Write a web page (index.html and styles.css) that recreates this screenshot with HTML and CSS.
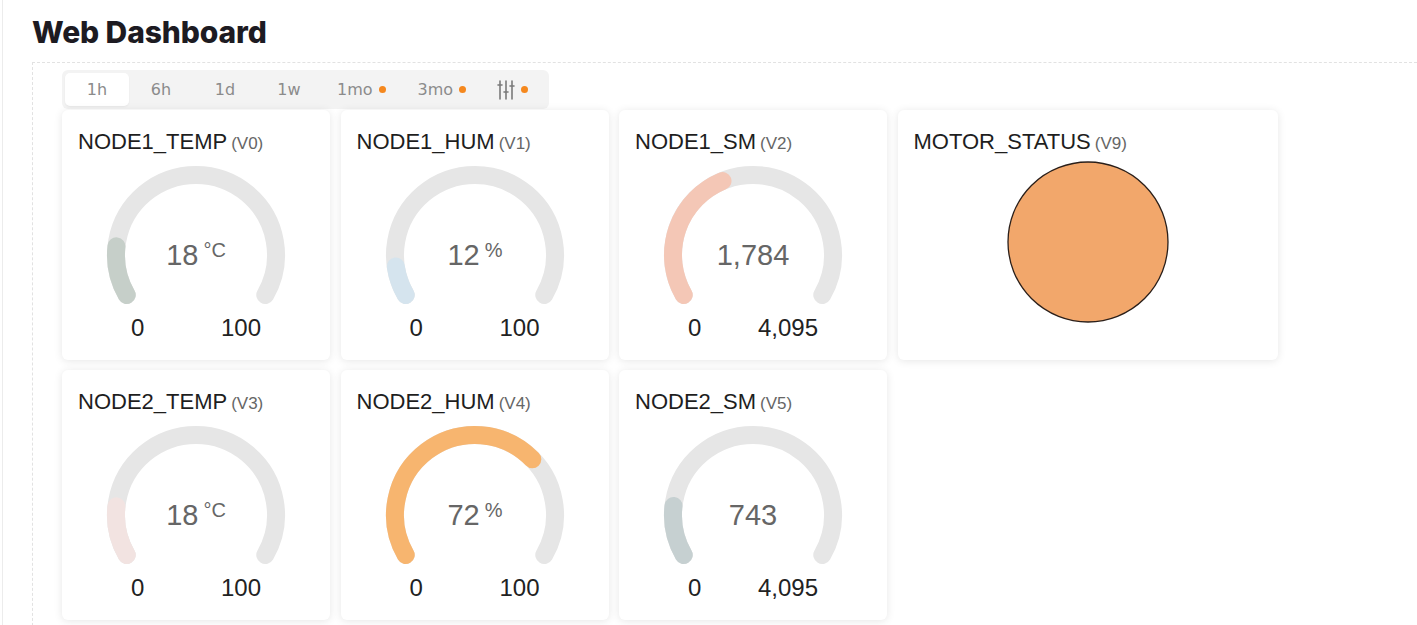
FILE: index.html
```html
<!DOCTYPE html>
<html lang="en">
<head>
<meta charset="utf-8">
<title>Web Dashboard</title>
<link rel="stylesheet" href="styles.css">
</head>
<body>
<div class="page">
  <h1 class="title">Web Dashboard</h1>
  <div class="board">
    <div class="tabs">
      <div class="tab active">1h</div>
      <div class="tab">6h</div>
      <div class="tab">1d</div>
      <div class="tab">1w</div>
      <div class="tab">1mo<span class="dot"></span></div>
      <div class="tab">3mo<span class="dot"></span></div>
      <div class="tab">
        <svg class="sliders" width="18" height="20" viewBox="0 0 18 20">
          <path d="M3 1v18M9 1v18M15 1v18" />
          <path d="M1 5h4M7 12h4M13 6h4" />
        </svg><span class="dot"></span>
      </div>
    </div>

    <div class="grid">
      <div class="card">
        <div class="card-title">NODE1_TEMP<span class="pin">(V0)</span></div>
        <svg class="gauge" width="180" height="145" viewBox="0 0 180 145">
          <path class="track" d="M20.72 130 A80 80 0 1 1 159.28 130"/>
          <path class="arc c-temp1" d="M20.72 130 A80 80 0 0 1 10.46 81.36"/>
          <text class="val" x="90" y="100" text-anchor="middle">18<tspan class="unit" dx="5" dy="-8">°C</tspan></text>
        </svg>
        <div class="range"><span>0</span><span>100</span></div>
      </div>

      <div class="card">
        <div class="card-title">NODE1_HUM<span class="pin">(V1)</span></div>
        <svg class="gauge" width="180" height="145" viewBox="0 0 180 145">
          <path class="track" d="M20.72 130 A80 80 0 1 1 159.28 130"/>
          <path class="arc c-hum1" d="M20.72 130 A80 80 0 0 1 10.82 101.41"/>
          <text class="val" x="90" y="100" text-anchor="middle">12<tspan class="unit" dx="5" dy="-8">%</tspan></text>
        </svg>
        <div class="range"><span>0</span><span>100</span></div>
      </div>

      <div class="card">
        <div class="card-title">NODE1_SM<span class="pin">(V2)</span></div>
        <svg class="gauge" width="180" height="145" viewBox="0 0 180 145">
          <path class="track" d="M20.72 130 A80 80 0 1 1 159.28 130"/>
          <path class="arc c-sm1" d="M20.72 130 A80 80 0 0 1 59.51 16.04"/>
          <text class="val" x="90" y="100" text-anchor="middle">1,784</text>
        </svg>
        <div class="range"><span>0</span><span>4,095</span></div>
      </div>

      <div class="card card-wide">
        <div class="card-title">MOTOR_STATUS<span class="pin">(V9)</span></div>
        <svg class="led" width="164" height="164" viewBox="0 0 164 164">
          <circle cx="82" cy="82" r="80"/>
        </svg>
      </div>

      <div class="card">
        <div class="card-title">NODE2_TEMP<span class="pin">(V3)</span></div>
        <svg class="gauge" width="180" height="145" viewBox="0 0 180 145">
          <path class="track" d="M20.72 130 A80 80 0 1 1 159.28 130"/>
          <path class="arc c-temp2" d="M20.72 130 A80 80 0 0 1 10.46 81.36"/>
          <text class="val" x="90" y="100" text-anchor="middle">18<tspan class="unit" dx="5" dy="-8">°C</tspan></text>
        </svg>
        <div class="range"><span>0</span><span>100</span></div>
      </div>

      <div class="card">
        <div class="card-title">NODE2_HUM<span class="pin">(V4)</span></div>
        <svg class="gauge" width="180" height="145" viewBox="0 0 180 145">
          <path class="track" d="M20.72 130 A80 80 0 1 1 159.28 130"/>
          <path class="arc c-hum2" d="M20.72 130 A80 80 0 0 1 147.35 34.22"/>
          <text class="val" x="90" y="100" text-anchor="middle">72<tspan class="unit" dx="5" dy="-8">%</tspan></text>
        </svg>
        <div class="range"><span>0</span><span>100</span></div>
      </div>

      <div class="card">
        <div class="card-title">NODE2_SM<span class="pin">(V5)</span></div>
        <svg class="gauge" width="180" height="145" viewBox="0 0 180 145">
          <path class="track" d="M20.72 130 A80 80 0 1 1 159.28 130"/>
          <path class="arc c-sm2" d="M20.72 130 A80 80 0 0 1 10.51 80.94"/>
          <text class="val" x="90" y="100" text-anchor="middle">743</text>
        </svg>
        <div class="range"><span>0</span><span>4,095</span></div>
      </div>
    </div>
  </div>
</div>
</body>
</html>
```

FILE: styles.css
```css
html, body {
  margin: 0;
  padding: 0;
  background: #ffffff;
  overflow: hidden;
}

body {
  font-family: "Liberation Sans", Arial, sans-serif;
  color: #222;
}

.page {
  margin-left: 2px;
  border-left: 1px solid #ececec;
  padding-left: 29px;
  min-height: 625px;
}

.title {
  margin: 0;
  padding-top: 14px;
  height: 36px;
  line-height: 36px;
  font-family: "Inter", "Liberation Sans", sans-serif;
  font-weight: 800;
  font-size: 30px;
  letter-spacing: -0.1px;
  color: #1d1b22;
  margin-bottom: 12px;
}

.board {
  border: 1px dashed #e2e2e2;
  border-right: none;
  padding: 7px 0 0 29px;
  min-height: 600px;
}

.tabs {
  display: inline-flex;
  background: #f3f3f3;
  border-radius: 6px;
  padding: 3px;
  height: 33px;
}

.tab {
  min-width: 64px;
  box-sizing: border-box;
  padding: 0 16px;
  display: flex;
  align-items: center;
  justify-content: center;
  font-family: "DejaVu Sans", sans-serif;
  font-size: 16px;
  color: #8b8b8b;
}

.tab.active {
  background: #ffffff;
  border-radius: 5px;
  box-shadow: 0 1px 2px rgba(0, 0, 0, 0.05);
}

.dot {
  width: 7px;
  height: 7px;
  border-radius: 50%;
  background: #f5881e;
  margin-left: 6px;
  flex: none;
}

.sliders {
  display: block;
  margin-left: -4px;
}

.sliders path {
  stroke: #7a7a7a;
  stroke-width: 1.6;
  fill: none;
  stroke-linecap: round;
}

.grid {
  display: grid;
  grid-template-columns: 268px 268px 268px 380px;
  grid-template-rows: 250px 250px;
  column-gap: 10.5px;
  row-gap: 10px;
  margin-top: 1px;
}

.card {
  background: #ffffff;
  border-radius: 6px;
  box-shadow: 0 1px 8px rgba(0, 0, 0, 0.1);
  padding: 19px 16px 0;
  display: flex;
  flex-direction: column;
  align-items: center;
}

.card-title {
  align-self: stretch;
  font-size: 22px;
  line-height: 26px;
  color: #1e1e1e;
  letter-spacing: 0;
  white-space: nowrap;
}

.pin {
  font-size: 17px;
  color: #666;
  margin-left: 4px;
}

.gauge {
  display: block;
  margin-top: 8px;
}

.track, .arc {
  fill: none;
  stroke-width: 18;
  stroke-linecap: round;
}

.track { stroke: #e6e6e6; }
.c-temp1 { stroke: #c6cfc9; }
.c-hum1 { stroke: #d5e4ee; }
.c-sm1 { stroke: #f4c7b6; }
.c-temp2 { stroke: #f2e3e1; }
.c-hum2 { stroke: #f7b56f; }
.c-sm2 { stroke: #c6d0d1; }

.val {
  font-family: "Liberation Sans", Arial, sans-serif;
  font-size: 29px;
  fill: #666;
}

.unit {
  font-size: 20px;
}

.range {
  width: 130px;
  display: flex;
  justify-content: space-between;
  font-size: 24px;
  line-height: 28px;
  color: #222;
  margin-top: 4px;
}

.led {
  display: block;
  margin-top: 3px;
}

.led circle {
  fill: #f2a76b;
  stroke: #2a1f1a;
  stroke-width: 1.3;
}
```
